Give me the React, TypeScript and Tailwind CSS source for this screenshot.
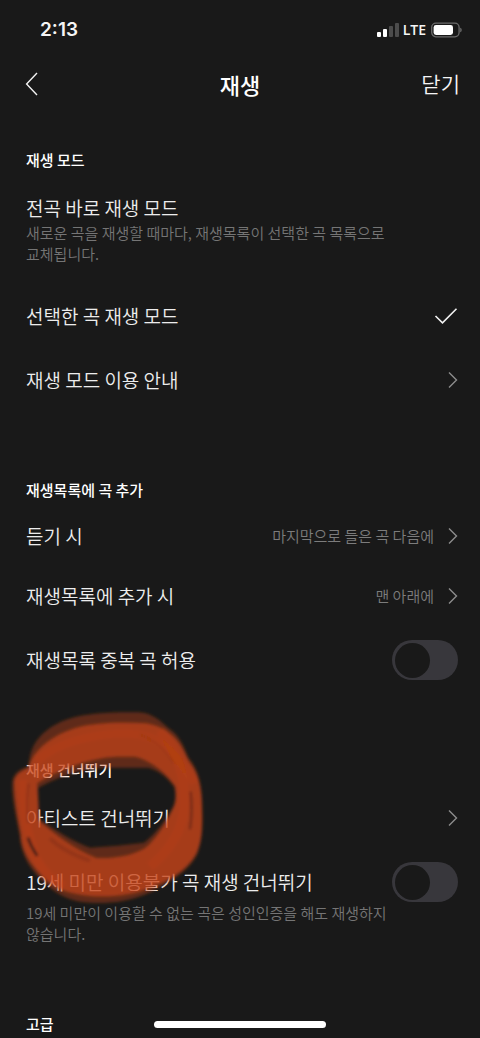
import { useState } from "react";
import type { ReactNode } from "react";

const ChevronRight = () => (
  <svg width="10" height="18" viewBox="0 0 10 18" fill="none" className="shrink-0" aria-hidden="true">
    <path d="M1 1.5L8.5 9L1 16.5" stroke="#8c8c8c" strokeWidth="1.4" />
  </svg>
);

const CheckMark = () => (
  <svg width="24" height="18" viewBox="0 0 24 18" fill="none" className="shrink-0" aria-hidden="true">
    <path d="M1.5 9L8.5 15.8L22.5 1.8" stroke="#f2f2f2" strokeWidth="1.6" />
  </svg>
);

const StatusBar = () => (
  <div className="flex h-15 items-center justify-between pl-10 pr-[18px] font-['Inter',sans-serif] text-[#f5f5f5]">
    <span className="text-[19px] font-semibold">2:13</span>
    <div className="flex items-center gap-1">
      <svg width="22" height="14" viewBox="0 0 22 14" aria-hidden="true">
        <rect x="0" y="9" width="4" height="5" rx="1" fill="#fff" />
        <rect x="6" y="6" width="4" height="8" rx="1" fill="#fff" />
        <rect x="12" y="3" width="4" height="11" rx="1" fill="#4c4c4c" />
        <rect x="18" y="0" width="4" height="14" rx="1" fill="#4c4c4c" />
      </svg>
      <span className="font-['Open_Sans',sans-serif] text-sm font-semibold">LTE</span>
      <svg width="32" height="16" viewBox="0 0 32 16" aria-hidden="true">
        <rect x="1.7" y="1.2" width="27.4" height="13.6" rx="4.2" fill="none" stroke="#6b6b6b" strokeWidth="1.3" />
        <rect x="3.6" y="3" width="19.4" height="10" rx="2.4" fill="#fff" />
        <path d="M30.2 5.8C32.2 6.2 32.2 9.8 30.2 10.2Z" fill="#6b6b6b" />
      </svg>
    </div>
  </div>
);

const Header = () => (
  <header className="grid h-12 grid-cols-3 items-center px-5">
    <button type="button" aria-label="이전" className="justify-self-start pl-[5px]">
      <svg width="14" height="24" viewBox="0 0 14 24" fill="none" aria-hidden="true">
        <path d="M12 1L1.6 12L12 23" stroke="#f2f2f2" strokeWidth="1.4" />
      </svg>
    </button>
    <h1 className="text-center text-[22px] font-medium text-white">재생</h1>
    <button type="button" className="justify-self-end text-[21px] font-[350] text-[#f5f5f5]">
      닫기
    </button>
  </header>
);

const SectionTitle = ({ children }: { children: ReactNode }) => (
  <h2 className="text-[15px] leading-6 font-medium text-white">{children}</h2>
);

const Description = ({ children }: { children: ReactNode }) => (
  <p className="pr-16 text-[15px] leading-[21px] text-[#757575]">{children}</p>
);

const LinkRow = ({ label, value, className = "h-16" }: { label: string; value?: string; className?: string }) => (
  <button type="button" className={`flex w-full items-center text-left ${className}`}>
    <span className="flex-1">{label}</span>
    {value && <span className="mr-[14px] text-[15px] text-[#7c7c7c]">{value}</span>}
    <ChevronRight />
  </button>
);

const ToggleRow = ({ label, className = "" }: { label: string; className?: string }) => {
  const [checked, setChecked] = useState(false);

  return (
    <label className={`flex items-center justify-between ${className}`}>
      <span>{label}</span>
      <input
        type="checkbox"
        checked={checked}
        onChange={(e) => setChecked(e.target.checked)}
        className="flex h-10 w-[66px] shrink-0 appearance-none items-center rounded-full bg-[#38373c] px-[3px] before:size-[35px] before:rounded-full before:bg-[#191919] checked:justify-end checked:bg-[#5a63ff]"
      />
    </label>
  );
};

// red marker circle around the artist skip row
const MarkerCircle = () => (
  <svg
    width="240"
    height="220"
    viewBox="0 0 720 660"
    fill="none"
    className="pointer-events-none absolute top-1.5 left-0"
    aria-hidden="true"
  >
    <defs>
      <filter id="soft" x="-10%" y="-10%" width="120%" height="120%">
        <feGaussianBlur stdDeviation="4" />
      </filter>
    </defs>
    <g filter="url(#soft)">
      <path
        fillRule="evenodd"
        fill="#c84416"
        fillOpacity="0.4"
        d="M88 180C96 115 150 75 205 57C265 38 340 36 415 37C455 38 480 62 505 84C540 106 552 142 566 175C597 210 607 260 607 325C609 385 606 425 592 462C566 515 510 546 455 575C395 604 335 610 285 609C215 608 172 585 142 555C92 515 62 465 59 405C48 350 34 290 37 245C40 218 62 206 84 200ZM114 264C165 235 235 208 310 203L445 203C480 212 508 238 523 262C527 285 527 300 520 318C500 355 468 402 432 428C380 434 325 440 270 443C220 425 165 390 118 356Z"
      />
      <path
        fillRule="evenodd"
        fill="#c84416"
        fillOpacity="0.68"
        d="M90 190C106 145 160 105 225 84C290 66 370 66 440 70C485 78 515 100 535 126C552 148 558 170 570 188C599 225 606 275 606 330C608 390 604 430 588 462C560 512 505 542 450 564C385 590 310 594 250 586C190 578 148 556 120 522C80 480 62 440 62 400C52 350 42 290 42 245C46 222 66 212 84 204ZM112 250C175 208 275 173 350 170L405 170C455 182 500 222 525 258C529 280 529 300 522 320C504 358 480 400 446 435C415 464 350 476 290 474C225 448 165 402 117 362Z"
      />
      <path d="M68 240C66 320 84 420 112 480C130 515 155 540 190 560" stroke="#d04414" strokeOpacity="0.2" strokeWidth="26" />
      <path d="M480 90C530 150 560 240 552 320C548 390 510 450 450 500" stroke="#c84416" strokeOpacity="0.2" strokeWidth="30" />
      <path d="M110 185C180 115 330 92 420 104C490 115 540 180 585 250" stroke="#c84416" strokeOpacity="0.2" strokeWidth="26" />
      <path d="M572 275C577 320 575 355 570 388" stroke="#4a1e14" strokeOpacity="0.75" strokeWidth="6" />
      <path d="M84 412C90 434 100 450 112 468" stroke="#241a18" strokeOpacity="0.9" strokeWidth="9" />
      <path d="M86 250C80 290 80 330 84 370" stroke="#6b2714" strokeOpacity="0.4" strokeWidth="6" />
      <path d="M150 415C180 445 220 465 270 482" stroke="#6b2714" strokeOpacity="0.3" strokeWidth="12" />
      <path d="M420 104C465 120 500 155 520 190" stroke="#6b2714" strokeOpacity="0.2" strokeWidth="6" />
    </g>
  </svg>
);

export default function App() {
  const [mode, setMode] = useState("selected");

  return (
    <div className="min-h-screen bg-[#191919] font-['Noto_Sans_CJK_KR',sans-serif] break-keep">
      <StatusBar />
      <Header />

      <main className="text-[19px] leading-7 font-[350] text-[#ededed]">
        <section className="pt-10 pr-[22px] pl-[26px]">
          <SectionTitle>재생 모드</SectionTitle>
          <label className="block pt-[22px] pb-5">
            <span className="flex items-center justify-between">
              전곡 바로 재생 모드
              <input
                type="radio"
                name="mode"
                className="sr-only"
                checked={mode === "all"}
                onChange={() => setMode("all")}
              />
              {mode === "all" && <CheckMark />}
            </span>
            <Description>새로운 곡을 재생할 때마다, 재생목록이 선택한 곡 목록으로 교체됩니다.</Description>
          </label>
          <label className="flex h-16 items-center justify-between">
            선택한 곡 재생 모드
            <input
              type="radio"
              name="mode"
              className="sr-only"
              checked={mode === "selected"}
              onChange={() => setMode("selected")}
            />
            {mode === "selected" && <CheckMark />}
          </label>
          <LinkRow label="재생 모드 이용 안내" />
        </section>

        <section className="pt-[66px] pr-[22px] pl-[26px]">
          <SectionTitle>재생목록에 곡 추가</SectionTitle>
          <div className="pt-1">
            <LinkRow label="듣기 시" value="마지막으로 들은 곡 다음에" className="h-15" />
            <LinkRow label="재생목록에 추가 시" value="맨 아래에" className="h-15" />
            <ToggleRow label="재생목록 중복 곡 허용" className="h-17" />
          </div>
        </section>

        <section className="relative pt-16 pr-[22px] pl-[26px]">
          <SectionTitle>재생 건너뛰기</SectionTitle>
          <div className="pt-1">
            <LinkRow label="아티스트 건너뛰기" />
            <ToggleRow label="19세 미만 이용불가 곡 재생 건너뛰기" className="pt-3" />
            <Description>19세 미만이 이용할 수 없는 곡은 성인인증을 해도 재생하지 않습니다.</Description>
          </div>
          <MarkerCircle />
        </section>

        <section className="pt-[68px] pr-[22px] pl-[26px]">
          <SectionTitle>고급</SectionTitle>
        </section>
      </main>

      <div className="fixed inset-x-0 bottom-[10px] flex justify-center">
        <div className="h-[7px] w-[172px] rounded-full bg-white" />
      </div>
    </div>
  );
}
